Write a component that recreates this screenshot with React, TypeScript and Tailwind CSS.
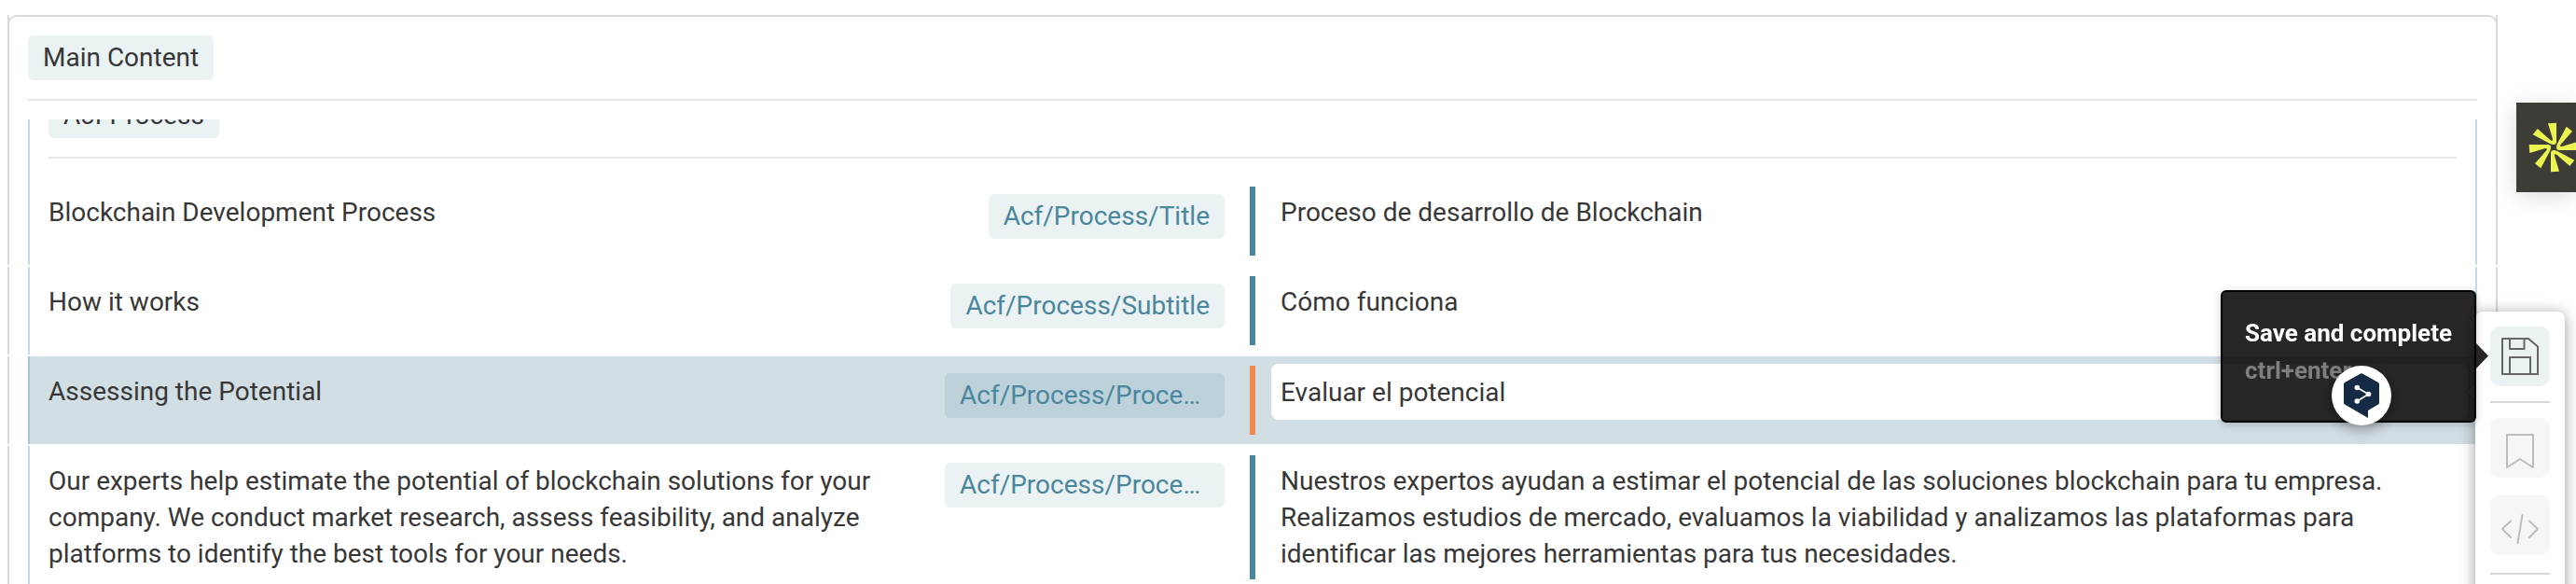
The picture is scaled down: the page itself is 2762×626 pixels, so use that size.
import { useState } from "react"

interface Segment {
  id: number
  source: string
  target: string
  context: string
}

const segments: Segment[] = [
  {
    id: 1,
    source: "Blockchain Development Process",
    target: "Proceso de desarrollo de Blockchain",
    context: "Acf/Process/Title",
  },
  {
    id: 2,
    source: "How it works",
    target: "Cómo funciona",
    context: "Acf/Process/Subtitle",
  },
  {
    id: 3,
    source: "Assessing the Potential",
    target: "Evaluar el potencial",
    context: "Acf/Process/Process/Title",
  },
  {
    id: 4,
    source:
      "Our experts help estimate the potential of blockchain solutions for your company. We conduct market research, assess feasibility, and analyze platforms to identify the best tools for your needs.",
    target:
      "Nuestros expertos ayudan a estimar el potencial de las soluciones blockchain para tu empresa. Realizamos estudios de mercado, evaluamos la viabilidad y analizamos las plataformas para identificar las mejores herramientas para tus necesidades.",
    context: "Acf/Process/Process/Text",
  },
]

function SectionHeader() {
  return (
    <div className="border-x-2 border-[#d8d8d8]">
      <div className="-mx-0.5 rounded-t-[10px] border-2 border-b-0 border-[#d8d8d8] px-5 pt-5 pb-5">
        <div className="border-b-2 border-[#e6e6e6] pb-5">
          <h2 className="w-fit rounded-md bg-[#eaf2f4] px-4 pt-1 pb-[5px]">
            Main Content
          </h2>
        </div>
      </div>
    </div>
  )
}

// Scrolled halfway under the section header, only its lower part is visible
function GroupHeader() {
  return (
    <div className="border-x-2 border-[#d8d8d8] px-5">
      <div className="border-x-2 border-[#c8dae2] px-5 pb-5">
        <div className="border-b-2 border-[#e6e6e6] pb-5">
          <div className="flex h-5 items-end overflow-hidden">
            <h3 className="rounded-md bg-[#eaf2f4] px-4 pt-1 pb-[5px]">
              Acf Process
            </h3>
          </div>
        </div>
      </div>
    </div>
  )
}

interface SegmentRowProps {
  segment: Segment
  active: boolean
}

function SegmentRow({ segment, active }: SegmentRowProps) {
  const [value, setValue] = useState(segment.target)

  return (
    <div className="mb-0.5 border-x-2 border-[#d8d8d8] px-5">
      <div
        className={`relative grid min-h-[94px] grid-cols-[1fr_6px_1fr] border-x-2 px-5 py-2.5 ${
          active ? "border-[#a9c6ce] bg-[#d1dee4]" : "border-[#c8dae2]"
        }`}
      >
        <div className="flex min-w-0 items-start justify-between gap-16 pt-2 pr-[27px]">
          <p className="pb-2">{segment.source}</p>
          <span
            className={`max-w-[300px] shrink-0 truncate rounded-md px-4 pt-1 pb-[5px] text-[#4a869c] ${
              active ? "bg-[#bdd1da]" : "bg-[#eaf2f4]"
            }`}
          >
            {segment.context}
          </span>
        </div>
        <div className={active ? "bg-[#ee8a4f]" : "bg-[#4a869c]"} />
        <div className="min-w-0 pl-[17px]">
          {active ? (
            <input
              type="text"
              aria-label="Translation"
              className="-mt-0.5 block h-[60px] w-[calc(100%+12px)] rounded-lg bg-white px-2.5 outline-none"
              value={value}
              onChange={(e) => setValue(e.target.value)}
            />
          ) : (
            <p className="py-2 pl-2.5">{value}</p>
          )}
        </div>
        {active && (
          <svg
            className="absolute top-[26px] -right-0.5 h-6 w-[14px]"
            viewBox="0 0 14 24"
          >
            <path
              d="M14 0 L1.5 12 L14 24"
              fill="#fff"
              stroke="#a0a0a0"
              strokeWidth="1"
            />
          </svg>
        )}
      </div>
    </div>
  )
}

function SaveIcon() {
  return (
    <svg
      className="size-10"
      viewBox="0 0 40 40"
      fill="none"
      stroke="#666"
      strokeWidth="2"
      strokeLinejoin="round"
    >
      <path d="M1 1 H29 L39 9.500 V39 H1 Z" />
      <path d="M9 1 V12 H24.500 V1" />
      <path d="M9 39 V21 H31 V39" />
    </svg>
  )
}

function BookmarkIcon() {
  return (
    <svg
      className="size-16"
      viewBox="0 0 64 64"
      fill="none"
      stroke="#bdbdbd"
      strokeWidth="2"
      strokeLinejoin="round"
    >
      <path d="M18 18 H46 V53 L32 44 L18 53 Z" />
    </svg>
  )
}

function CodeIcon() {
  return (
    <svg
      className="size-16"
      viewBox="0 0 64 64"
      fill="none"
      stroke="#bdbdbd"
      strokeWidth="2"
      strokeLinecap="round"
      strokeLinejoin="round"
    >
      <path d="M22 27.500 L13 36 L22 45" />
      <path d="M42 27.500 L51 36 L42 45" />
      <path d="M34.500 21 L29.500 51" />
    </svg>
  )
}

function Toolbar() {
  return (
    <div className="fixed top-[334px] right-3 w-24 rounded-lg bg-white p-4 pb-10 shadow-[0_2px_16px_rgba(0,0,0,0.4)]">
      <button
        aria-label="Save and complete"
        className="flex size-16 items-center justify-center rounded-[10px] bg-[#eaf2f4]"
      >
        <SaveIcon />
      </button>
      <hr className="my-4 border-t-2 border-[#d8d8d8]" />
      <button
        aria-label="Bookmark"
        className="flex size-16 items-center justify-center rounded-[10px] bg-[#f6f6f6]"
      >
        <BookmarkIcon />
      </button>
      <button
        aria-label="Insert tag"
        className="mt-[19px] flex size-16 items-center justify-center rounded-[10px] bg-[#f6f6f6]"
      >
        <CodeIcon />
      </button>
      <hr className="my-[19px] border-t-2 border-[#d8d8d8]" />
    </div>
  )
}

function SaveTooltip() {
  return (
    <div
      role="tooltip"
      className="fixed top-[311px] right-[107px] h-[142px] rounded-md border-2 border-black bg-black/85 px-6 py-6 text-[26px] leading-10 font-bold whitespace-nowrap text-white shadow-[0_2px_8px_rgba(0,0,0,0.2)]"
    >
      <p>Save and complete</p>
      <p className="text-[#7f7f7f]">ctrl+enter</p>
      <svg
        className="absolute top-[55px] -right-[15px] h-[27px] w-[13px]"
        viewBox="0 0 13 27"
      >
        <path d="M0 0 L13 13.500 L0 27 Z" fill="#262626" />
      </svg>
    </div>
  )
}

function TranslatorBadge() {
  return (
    <button
      aria-label="Translate"
      className="fixed top-[392px] right-[198px] flex size-16 items-center justify-center rounded-full bg-white shadow-[0_4px_16px_rgba(0,0,0,0.35)]"
    >
      <svg className="h-12 w-[38px]" viewBox="0 0 38 48">
        <path
          d="M18 0.500 Q19 0 20 0.500 L37 10 Q38 10.600 38 12 V32 Q38 33 37 33.600 L26 40 V48 L1 33.600 Q0 33 0 32 V12 Q0 10.600 1 10 Z"
          fill="#152a45"
        />
        <path
          d="M14.500 15.500 L26.500 22.500 L14.500 30"
          fill="none"
          stroke="#fff"
          strokeWidth="1.500"
        />
        <circle cx="14.300" cy="15.500" r="2.800" fill="#fff" />
        <circle cx="26.500" cy="22.500" r="2.800" fill="#fff" />
        <circle cx="14.300" cy="30" r="2.800" fill="#fff" />
      </svg>
    </button>
  )
}

function SideWidget() {
  return (
    <button
      aria-label="Open widget"
      className="fixed top-[110px] right-0 flex h-24 w-16 items-center overflow-hidden bg-[#3e3c37] pl-3 shadow-[0_4px_24px_rgba(0,0,0,0.15)]"
    >
      <svg
        className="size-14 shrink-0"
        viewBox="-28 -28 56 56"
        fill="#ecf550"
      >
        {/* four pairs of rays, each pair joined near the centre */}
        {[0, 90, 180, 270].map((angle) => (
          <path
            key={angle}
            d="M-6 -25.700 L3 -26.300 V-6 Q3 -3 0 -3 Q-1.500 -3 -4 -4 L-22.300 -13.700 L-17.300 -20 L-3 -7.500 Q-0.500 -6.500 -1 -9 Z"
            transform={`rotate(${angle})`}
          />
        ))}
      </svg>
    </button>
  )
}

export default function App() {
  return (
    <div className="h-screen overflow-hidden bg-white font-['Roboto',sans-serif] text-[28px] leading-[39px] text-[#373737]">
      <main className="mr-[84px] ml-2 pt-4">
        <SectionHeader />
        <GroupHeader />
        {segments.map((segment) => (
          <SegmentRow
            key={segment.id}
            segment={segment}
            active={segment.id === 3}
          />
        ))}
      </main>
      <Toolbar />
      <SaveTooltip />
      <TranslatorBadge />
      <SideWidget />
    </div>
  )
}
